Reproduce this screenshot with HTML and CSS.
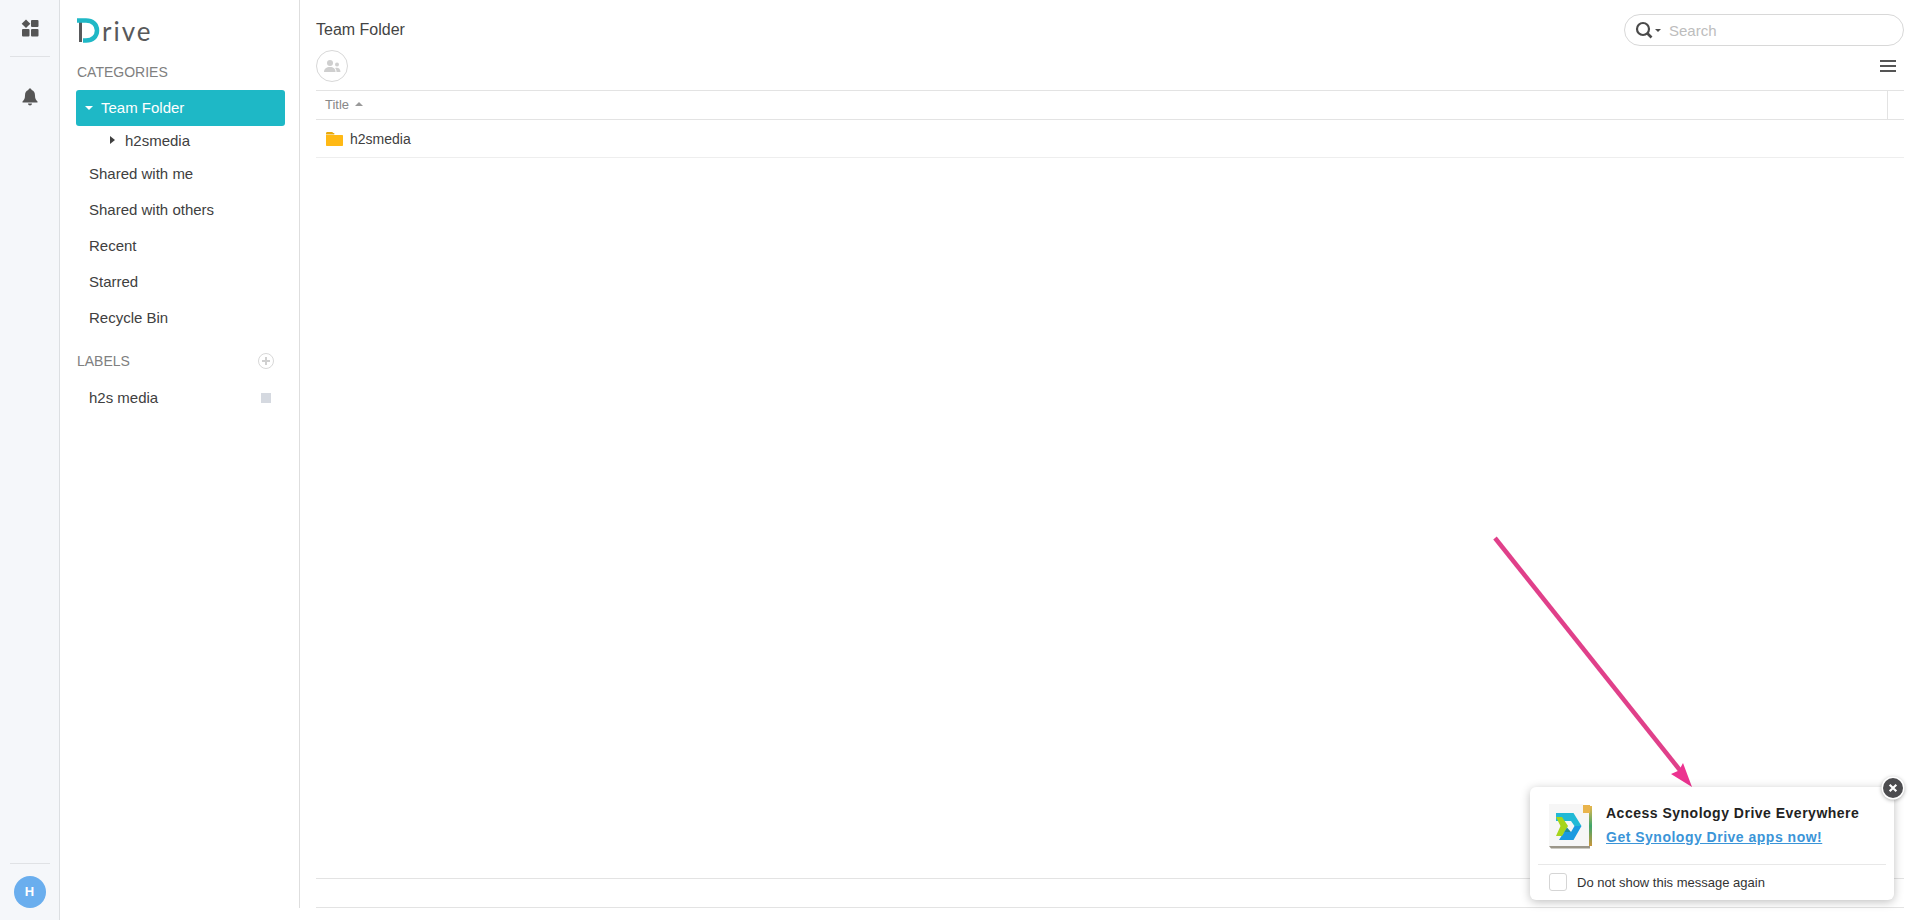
FILE: index.html
```html
<!DOCTYPE html>
<html lang="en">
<head>
    <meta charset="UTF-8">
    <meta name="viewport" content="width=device-width, initial-scale=1.0">
    <title>Synology Drive</title>
    <link rel="stylesheet" href="styles.css">
</head>
<body>
    <div class="app">
        <!-- desktop rail -->
        <div class="rail">
            <div class="rail-top">
                <svg class="rail-icon" width="18" height="18" viewBox="0 0 18 18">
                    <path fill="#555" d="M5 0.500 9.300 4.800 5 9 0.700 4.800z"/>
                    <rect fill="#555" x="10" y="1" width="7.500" height="7" rx="1"/>
                    <rect fill="#555" x="1" y="10" width="7.500" height="7.500" rx="1"/>
                    <rect fill="#555" x="10" y="10" width="7.500" height="7.500" rx="1"/>
                </svg>
            </div>
            <div class="rail-bell">
                <svg width="16" height="18" viewBox="0 0 16 18">
                    <path fill="#555" d="M8 0.500c1 0 1.600.7 1.600 1.500C12 2.700 13 4.800 13 7.500c0 3 .8 4.500 2.500 6v1H.5v-1C2.200 12 3 10.500 3 7.500 3 4.800 4 2.700 6.400 2 6.400 1.200 7 .5 8 .5z"/>
                    <path fill="#555" d="M6 15.500h4c0 1.100-.9 2-2 2s-2-.9-2-2z"/>
                </svg>
            </div>
            <div class="rail-bottom">
                <div class="avatar">H</div>
            </div>
        </div>

        <!-- categories -->
        <div class="sidebar">
            <div class="logo">
                <svg class="logo-d" width="24" height="26" viewBox="0 0 24 26">
                    <rect fill="#58595b" x="3" y="5" width="3" height="20"/>
                    <path fill="none" stroke="#1fb8c6" stroke-width="4.500" d="M1 3.500h9c6.500 0 11 4 11 10s-4.500 10-11 10H7"/>
                </svg>
                <span class="logo-text">rive</span>
            </div>
            <div class="side-title">CATEGORIES</div>
            <div class="tree-item active"><span class="caret-down"></span>Team Folder</div>
            <div class="tree-sub"><span class="caret-right"></span>h2smedia</div>
            <div class="side-item">Shared with me</div>
            <div class="side-item">Shared with others</div>
            <div class="side-item">Recent</div>
            <div class="side-item">Starred</div>
            <div class="side-item">Recycle Bin</div>
            <div class="side-title labels">
                LABELS
                <span class="add-label">
                    <svg width="16" height="16" viewBox="0 0 16 16">
                        <circle cx="8" cy="8" r="7.500" fill="none" stroke="#d8d8d8"/>
                        <path stroke="#d0d0d0" stroke-width="2" d="M8 4v8M4 8h8"/>
                    </svg>
                </span>
            </div>
            <div class="side-item label-row">h2s media<span class="label-color"></span></div>
        </div>

        <!-- file list -->
        <div class="main">
            <div class="main-head">
                <div class="path">Team Folder</div>
                <div class="search">
                    <svg width="18" height="18" viewBox="0 0 18 18">
                        <circle cx="8" cy="8" r="6" fill="none" stroke="#4a4a4a" stroke-width="2.200"/>
                        <path stroke="#4a4a4a" stroke-width="2.600" d="M12 12l4.500 4.500"/>
                    </svg>
                    <span class="search-caret"></span>
                    <span class="search-text">Search</span>
                </div>
            </div>
            <div class="toolbar">
                <div class="member-btn">
                    <svg width="18" height="14" viewBox="0 0 18 14">
                        <circle cx="7" cy="4" r="3" fill="#cfcfcf"/>
                        <path fill="#cfcfcf" d="M1 13c0-3.500 2.500-5 6-5s5.500 1.500 5.500 5z"/>
                        <circle cx="14" cy="5.500" r="2" fill="#cfcfcf"/>
                        <path fill="#cfcfcf" d="M13.500 13c0-2-.5-3-1.500-4 2.500-1 5.500 0 5.500 4z"/>
                    </svg>
                </div>
                <div class="menu-btn"><span></span><span></span><span></span></div>
            </div>
            <div class="table-head">
                <div class="col-title">Title<span class="sort-up"></span></div>
                <div class="col-end"></div>
            </div>
            <div class="file-row">
                <svg width="17" height="14" viewBox="0 0 17 14">
                    <path fill="#e8a90c" d="M0 1.500C0 .700.500 0 1.300 0h4.500c.7 0 1 .3 1.500 1h1v1.500H0z"/>
                    <path fill="#ffb915" d="M0 3h16c.6 0 1 .4 1 1v9c0 .6-.4 1-1 1H1c-.6 0-1-.4-1-1z"/>
                </svg>
                <span>h2smedia</span>
            </div>
            <div class="spacer"></div>
            <div class="foot-a"></div>
            <div class="foot-b"></div>
        </div>
    </div>

    <!-- arrow drawn over the screenshot -->
    <svg class="arrow" width="240" height="280" viewBox="0 0 240 280">
        <path stroke="#e0408a" stroke-width="4.500" d="M15 18 203 254"/>
        <path fill="#ec3390" d="M212 267 191 254 199 250.500 203 243z"/>
    </svg>

    <div class="promo">
        <div class="promo-close">
            <svg width="12" height="12" viewBox="0 0 12 12">
                <path stroke="#fff" stroke-width="2.600" d="M2 2l8 8M10 2l-8 8"/>
            </svg>
        </div>
        <div class="promo-body">
            <svg class="promo-logo" width="46" height="48" viewBox="0 0 46 48">
                <defs>
                    <linearGradient id="spine" x1="0" y1="0" x2="0" y2="1">
                        <stop offset="0" stop-color="#e8b64c"/>
                        <stop offset="0.5" stop-color="#3fa66b"/>
                        <stop offset="1" stop-color="#c9963c"/>
                    </linearGradient>
                </defs>
                <rect fill="url(#spine)" x="41" y="4" width="3" height="40"/>
                <path fill="#9a9588" d="M1 44h41v2.500H3z"/>
                <path fill="#f6f6f6" d="M1 2h34v9h6v33H1z"/>
                <path fill="#e9b44c" d="M35 3h7v8h-7z"/>
                <path fill="#21b9d6" d="M8 11H25.500L33.500 24H26.500L23 19H8z"/>
                <path fill="#1a9ae0" d="M33.500 24 25.500 38H11L16 30H23L26.500 24z"/>
                <path fill="#a6d51c" d="M8 15H14L20 24 14 34H8L12.500 24z"/>
                <path fill="#1e8c9a" d="M15.500 31 19 25.500 23 30 16 30z"/>
            </svg>
            <div class="promo-text">
                <div class="promo-title">Access Synology Drive Everywhere</div>
                <a class="promo-link" href="#">Get Synology Drive apps now!</a>
            </div>
        </div>
        <div class="promo-foot">
            <span class="checkbox"></span>
            <span>Do not show this message again</span>
        </div>
    </div>
</body>
</html>
```

FILE: styles.css
```css
* {
    box-sizing: border-box;
}
html, body {
    margin: 0;
    height: 100%;
    overflow: hidden;
    background: #fff;
    font-family: "Liberation Sans", Arial, sans-serif;
    font-size: 14px;
    color: #404040;
}
.app {
    display: flex;
    height: 920px;
}

/* rail */
.rail {
    width: 60px;
    flex: none;
    display: flex;
    flex-direction: column;
    align-items: center;
    background: #f5f7fa;
    border-right: 1px solid #dcdfe2;
}
.rail-top {
    width: 40px;
    height: 57px;
    padding-top: 19px;
    display: flex;
    justify-content: center;
    border-bottom: 1px solid #e0e2e5;
}
.rail-bell {
    margin-top: 31px;
    height: 18px;
}
.rail-bottom {
    margin-top: auto;
    width: 40px;
    height: 57px;
    padding-top: 12px;
    border-top: 1px solid #e0e2e5;
}
.avatar {
    width: 32px;
    height: 32px;
    margin: 0 auto;
    border-radius: 50%;
    background: #6aaeee;
    color: #fff;
    font-size: 13px;
    font-weight: bold;
    line-height: 32px;
    text-align: center;
}

/* sidebar */
.sidebar {
    width: 240px;
    flex: none;
    height: 908px;
    padding: 17px 16px 0 16px;
    border-right: 1px solid #dedede;
}
.logo {
    display: flex;
    align-items: flex-end;
    height: 26px;
}
.logo-d {
    flex: none;
}
.logo-text {
    margin: 0 0 -1px 2px;
    font-family: "Lato", sans-serif;
    font-size: 26px;
    line-height: 26px;
    letter-spacing: 2px;
    color: #58595b;
}
.side-title {
    margin-top: 21px;
    padding-left: 1px;
    height: 17px;
    font-size: 14px;
    line-height: 17px;
    color: #808080;
}
.side-title.labels {
    display: flex;
    justify-content: space-between;
    align-items: center;
    margin-top: 16px;
    height: 18px;
    padding-right: 9px;
}
.add-label {
    display: flex;
}
.tree-item.active {
    margin-top: 9px;
    width: 209px;
    height: 36px;
    display: flex;
    align-items: center;
    padding: 0 0 1px 9px;
    border-radius: 3px;
    background: #1eb8c6;
    color: #fff;
    font-size: 15px;
}
.caret-down {
    width: 0;
    height: 0;
    margin-right: 8px;
    border-left: 4px solid transparent;
    border-right: 4px solid transparent;
    border-top: 4px solid #fff;
}
.tree-sub {
    height: 30px;
    display: flex;
    align-items: center;
    padding: 0 0 2px 34px;
    font-size: 15px;
}
.caret-right {
    width: 0;
    height: 0;
    margin-right: 10px;
    border-top: 4px solid transparent;
    border-bottom: 4px solid transparent;
    border-left: 5px solid #404040;
}
.side-item {
    height: 36px;
    line-height: 36px;
    padding-left: 13px;
    font-size: 15px;
}
.label-row {
    margin-top: 10px;
    display: flex;
    justify-content: space-between;
    align-items: center;
    padding-right: 12px;
}
.label-color {
    width: 10px;
    height: 10px;
    background: #d5d9e0;
}

/* main area */
.main {
    flex: 1;
    display: flex;
    flex-direction: column;
    padding: 0 16px 12px 16px;
    min-width: 0;
}
.main-head {
    height: 50px;
    display: flex;
    justify-content: space-between;
    padding-top: 14px;
}
.path {
    font-size: 16px;
    line-height: 30px;
    height: 30px;
    margin-top: 1px;
    color: #444;
}
.search {
    width: 280px;
    height: 32px;
    display: flex;
    align-items: center;
    padding-left: 10px;
    border: 1px solid #d8d8d8;
    border-radius: 16px;
}
.search-caret {
    width: 0;
    height: 0;
    margin: 0 8px 0 2px;
    border-left: 3px solid transparent;
    border-right: 3px solid transparent;
    border-top: 3px solid #4a4a4a;
}
.search-text {
    font-size: 15px;
    color: #bdbdbd;
}
.toolbar {
    height: 40px;
    display: flex;
    justify-content: space-between;
    align-items: flex-start;
}
.member-btn {
    width: 32px;
    height: 32px;
    display: flex;
    align-items: center;
    justify-content: center;
    border: 1px solid #d8d8d8;
    border-radius: 50%;
}
.menu-btn {
    margin: 10px 8px 0 0;
    width: 16px;
    display: flex;
    flex-direction: column;
    gap: 3px;
}
.menu-btn span {
    height: 2px;
    background: #555;
}
.table-head {
    height: 30px;
    display: flex;
    justify-content: space-between;
    border-top: 1px solid #e3e3e3;
    border-bottom: 1px solid #e3e3e3;
}
.col-title {
    display: flex;
    align-items: center;
    padding: 0 0 2px 9px;
    font-size: 13px;
    color: #888;
}
.sort-up {
    width: 0;
    height: 0;
    margin-left: 6px;
    border-left: 4px solid transparent;
    border-right: 4px solid transparent;
    border-bottom: 4px solid #999;
}
.col-end {
    width: 17px;
    border-left: 1px solid #e3e3e3;
}
.file-row {
    height: 38px;
    display: flex;
    align-items: center;
    gap: 7px;
    padding-left: 10px;
    border-bottom: 1px solid #eee;
    font-size: 14px;
}
.spacer {
    flex: 1;
}
.foot-a {
    height: 29px;
    border-top: 1px solid #e3e3e3;
}
.foot-b {
    height: 1px;
    background: #e3e3e3;
}

/* overlays */
.arrow {
    position: absolute;
    left: 1480px;
    top: 520px;
}
.promo {
    position: absolute;
    left: 1530px;
    top: 787px;
    width: 364px;
    height: 113px;
    background: #fff;
    border-radius: 6px;
    box-shadow: 0 2px 10px rgba(0, 0, 0, 0.25);
}
.promo-close {
    position: absolute;
    right: -9px;
    top: -9px;
    width: 20px;
    height: 20px;
    display: flex;
    align-items: center;
    justify-content: center;
    border-radius: 50%;
    background: #4c4c4f;
    box-shadow: 0 0 0 1.5px #fff, 0 1px 4px 1px rgba(0, 0, 0, 0.4);
}
.promo-close svg {
    width: 10px;
    height: 10px;
}
.promo-body {
    height: 78px;
    margin: 0 8px;
    display: flex;
    align-items: flex-start;
    padding: 15px 0 0 10px;
    border-bottom: 1px solid #e8e8e8;
}
.promo-logo {
    flex: none;
}
.promo-text {
    margin-left: 12px;
    padding-top: 2px;
}
.promo-title {
    font-size: 14px;
    font-weight: bold;
    letter-spacing: 0.5px;
    line-height: 18px;
    color: #222;
}
.promo-link {
    display: block;
    margin-top: 6px;
    font-size: 14px;
    font-weight: bold;
    letter-spacing: 0.5px;
    line-height: 18px;
    color: #3b95d8;
}
.promo-foot {
    height: 34px;
    display: flex;
    align-items: center;
    padding-left: 19px;
    gap: 10px;
    font-size: 13px;
    color: #333;
}
.checkbox {
    width: 18px;
    height: 18px;
    border: 1px solid #d5d5d5;
    border-radius: 3px;
}
```
